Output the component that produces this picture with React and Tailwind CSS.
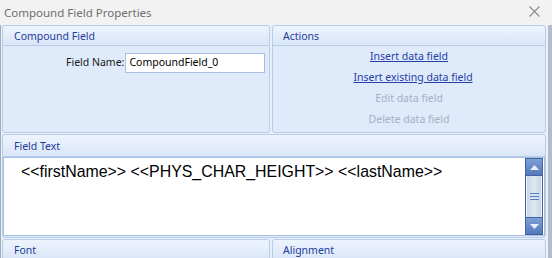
import React from "react";

function Header({ children, className = "" }) {
  return (
    <div
      className={
        "h-[20px] shrink-0 flex items-center pt-[1px] border-b border-[#b7cdec] bg-gradient-to-b from-[#eef4fd] to-[#d9e6f8] text-[#1f3c99] text-[10.5px] leading-none rounded-t-[3px] " +
        className
      }
    >
      {children}
    </div>
  );
}

function Panel({ className = "", children }) {
  return (
    <div
      className={
        "flex flex-col border border-[#b7cdec] rounded-[3px] bg-[#dfeafa] overflow-hidden " +
        className
      }
    >
      {children}
    </div>
  );
}

export default function App() {
  return (
    <div className="w-[552px] h-[258px] overflow-hidden flex flex-col bg-[#f0f0f0] font-['Noto_Sans',sans-serif]">
      {/* Title bar */}
      <div className="h-[25px] shrink-0 flex items-center justify-between pl-[4px] pr-[12px] bg-[#f2f2f2]">
        <span className="text-[11.5px] text-[#6f6f6f] leading-none">Compound Field Properties</span>
        <svg width="11" height="11" viewBox="0 0 11 11" className="mt-[-2px]">
          <path d="M0.5 0.5 L10.5 10.5 M10.5 0.5 L0.5 10.5" stroke="#8a8a8a" strokeWidth="1.1" fill="none" />
        </svg>
      </div>

      <div className="flex flex-1 min-h-0">
        <div className="w-[1px] bg-[#a3acb9]" />
        <div className="w-[1px] bg-[#e9eff8]" />
        <div className="flex-1 flex flex-col gap-[1px] bg-[#e9eff8]">
          {/* Row 1 */}
          <div className="flex gap-[2px] h-[108px] shrink-0">
            <Panel className="w-[268px]">
              <Header className="pl-[11px]">Compound Field</Header>
              <div className="flex items-center pt-[7px] pl-[63px] whitespace-nowrap">
                <span className="text-[10.5px] text-[#1a1a1a] mr-[1px] shrink-0">Field Name:</span>
                <div className="w-[140px] shrink-0 h-[20px] bg-white border border-[#a9bfdf] flex items-center pl-[3px] text-[10.5px] text-black">
                  CompoundField_0
                </div>
              </div>
            </Panel>
            <Panel className="flex-1">
              <Header className="pl-[10px]">Actions</Header>
              <div className="flex flex-col items-center text-[10.5px] leading-none pt-[5px] gap-[9px] whitespace-nowrap">
                <span className="text-[#2340a8] underline h-[12px]">Insert data field</span>
                <span className="text-[#2340a8] underline h-[12px] ml-[8px]">Insert existing data field</span>
                <span className="text-[#a3b1c8] h-[12px]">Edit data field</span>
                <span className="text-[#a3b1c8] h-[12px]">Delete data field</span>
              </div>
            </Panel>
          </div>

          {/* Row 2 */}
          <Panel className="h-[104px] shrink-0">
            <Header className="pl-[11px] h-[22px]">Field Text</Header>
            <div className="flex-1 flex bg-white border border-[#a9bfdf] mb-[1px]">
              <div className="flex-1 pl-[17px] pt-[6px] font-['Liberation_Sans',sans-serif] text-[15.9px] leading-none text-black whitespace-nowrap">
                {"<<firstName>> <<PHYS_CHAR_HEIGHT>> <<lastName>>"}
              </div>
              <div className="w-[18px] flex flex-col border border-[#3f63a3] mr-[1px]">
                <div className="h-[17px] flex items-center justify-center bg-gradient-to-b from-[#7d9fd6] to-[#5679bb] border-b border-[#3f63a3]">
                  <svg width="9" height="5" viewBox="0 0 9 5"><path d="M4.5 0 L9 5 L0 5 Z" fill="#e8eefa" /></svg>
                </div>
                <div className="flex-1 flex items-center justify-center bg-gradient-to-r from-[#c9d6e8] via-[#dfe7f2] to-[#c9d6e8] border-x border-[#eef3fa]">
                  <svg width="9" height="7" viewBox="0 0 9 7">
                    <path d="M0 0.5 H9 M0 3.5 H9 M0 6.5 H9" stroke="#5a7dbd" strokeWidth="1" />
                  </svg>
                </div>
                <div className="h-[17px] flex items-center justify-center bg-gradient-to-b from-[#7d9fd6] to-[#5679bb] border-t border-[#3f63a3]">
                  <svg width="9" height="5" viewBox="0 0 9 5"><path d="M0 0 L9 0 L4.5 5 Z" fill="#e8eefa" /></svg>
                </div>
              </div>
            </div>
          </Panel>

          {/* Row 3 */}
          <div className="flex gap-[2px] flex-1">
            <Panel className="w-[268px] rounded-b-none">
              <Header className="pl-[11px]">Font</Header>
            </Panel>
            <Panel className="flex-1 rounded-b-none">
              <Header className="pl-[10px]">Alignment</Header>
            </Panel>
          </div>
        </div>
        <div className="w-[2px] bg-[#eef0f3]" />
        <div className="w-[4px] bg-[#b4bccb]" />
      </div>
    </div>
  );
}
